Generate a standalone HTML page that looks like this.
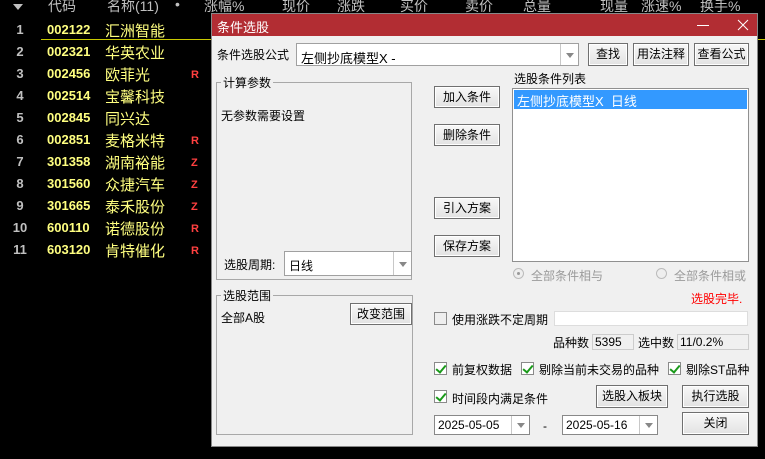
<!DOCTYPE html>
<html><head><meta charset="utf-8"><style>
*{margin:0;padding:0;box-sizing:border-box}
body{width:765px;height:459px;background:#000;position:relative;overflow:hidden;font-family:"Liberation Sans","Noto Sans CJK SC",sans-serif;font-size:12px}
.a{position:absolute;white-space:nowrap}
.h{color:#c0c0c0;font-size:14px;top:-4px}
.n{color:#c0c0c0;font-size:13px;font-weight:bold;width:26px;text-align:center}
.c{color:#ffff80;font-size:13px;font-weight:bold;left:47px}
.m{color:#ffff80;font-size:15px;left:105px}
.f{color:#ff4040;font-size:11px;font-weight:bold;left:191px}
.btn{position:absolute;border:1px solid #707070;background:linear-gradient(#f8f8f8,#e2e2e2);color:#000;text-align:center;font-size:12px;box-shadow:inset 0 0 0 1px #fff}
.box{position:absolute;background:#fff;border:1px solid #a0a0a0}
.grp{position:absolute;border:1px solid #a8a8a8}
.gl{position:absolute;background:#f0f0f0;padding:0 2px;font-size:12px;top:-9px;left:4px}
.t{position:absolute;font-size:12px;color:#000;white-space:nowrap}
.dd{position:absolute;right:0;top:0;bottom:0;width:18px;border-left:1px solid #c8c8c8}
.dd:after{content:"";position:absolute;left:5px;top:50%;margin-top:-2px;border:4px solid transparent;border-top:5px solid #888;border-bottom:0}
.cb{position:absolute;width:13px;height:13px;border:1px solid #8a8a8a;background:#fff}
.ck:after{content:"";position:absolute;left:3px;top:0px;width:4px;height:8px;border:solid #1a9a1a;border-width:0 2px 2px 0;transform:rotate(40deg)}
</style></head><body>
<div class="a" style="left:13px;top:4px;border:5px solid transparent;border-top:6px solid #c0c0c0;border-bottom:0"></div>
<div class="a h" style="left:48px">代码</div>
<div class="a h" style="left:107px">名称(11)</div>
<div class="a h" style="left:175px">•</div>
<div class="a h" style="left:204px">涨幅%</div>
<div class="a h" style="left:282px">现价</div>
<div class="a h" style="left:337px">涨跌</div>
<div class="a h" style="left:400px">买价</div>
<div class="a h" style="left:465px">卖价</div>
<div class="a h" style="left:523px">总量</div>
<div class="a h" style="left:600px">现量</div>
<div class="a h" style="left:641px">涨速%</div>
<div class="a h" style="left:700px">换手%</div>
<div class="a" style="left:41px;top:39px;width:171px;height:1px;background:#c8c800"></div>
<div class="a" style="left:758px;top:39px;width:7px;height:1px;background:#c8c800"></div>

<div class="a n" style="left:7px;top:22px">1</div><div class="a c" style="top:22px">002122</div><div class="a m" style="top:20px">汇洲智能</div>
<div class="a n" style="left:7px;top:44px">2</div><div class="a c" style="top:44px">002321</div><div class="a m" style="top:42px">华英农业</div>
<div class="a n" style="left:7px;top:66px">3</div><div class="a c" style="top:66px">002456</div><div class="a m" style="top:64px">欧菲光</div><div class="a f" style="top:69px">R</div>
<div class="a n" style="left:7px;top:88px">4</div><div class="a c" style="top:88px">002514</div><div class="a m" style="top:86px">宝馨科技</div>
<div class="a n" style="left:7px;top:110px">5</div><div class="a c" style="top:110px">002845</div><div class="a m" style="top:108px">同兴达</div>
<div class="a n" style="left:7px;top:132px">6</div><div class="a c" style="top:132px">002851</div><div class="a m" style="top:130px">麦格米特</div><div class="a f" style="top:135px">R</div>
<div class="a n" style="left:7px;top:154px">7</div><div class="a c" style="top:154px">301358</div><div class="a m" style="top:152px">湖南裕能</div><div class="a f" style="top:157px">Z</div>
<div class="a n" style="left:7px;top:176px">8</div><div class="a c" style="top:176px">301560</div><div class="a m" style="top:174px">众捷汽车</div><div class="a f" style="top:179px">Z</div>
<div class="a n" style="left:7px;top:198px">9</div><div class="a c" style="top:198px">301665</div><div class="a m" style="top:196px">泰禾股份</div><div class="a f" style="top:201px">Z</div>
<div class="a n" style="left:7px;top:220px">10</div><div class="a c" style="top:220px">600110</div><div class="a m" style="top:218px">诺德股份</div><div class="a f" style="top:223px">R</div>
<div class="a n" style="left:7px;top:242px">11</div><div class="a c" style="top:242px">603120</div><div class="a m" style="top:240px">肯特催化</div><div class="a f" style="top:245px">R</div>

<div class="a" style="left:211px;top:13px;width:547px;height:434px;background:#f0f0f0;border:1px solid #888">
 <div class="a" style="left:0;top:0;width:545px;height:22px;background:#b22d33;color:#fff;font-size:13px;padding:3px 0 0 5px">条件选股</div>
 <div class="a" style="left:485px;top:11px;width:12px;height:1px;background:#fff"></div>
 <svg class="a" style="left:525px;top:5px" width="12" height="12"><path d="M1 1L11 11M11 1L1 11" stroke="#fff" stroke-width="1"/></svg>
</div>
<div class="t" style="left:217px;top:46px">条件选股公式</div>
<div class="box" style="left:296px;top:43px;width:283px;height:23px"><div class="t" style="left:4px;top:4px;font-size:13px">左侧抄底模型X -</div><div class="dd"></div></div>
<div class="btn" style="left:588px;top:43px;width:40px;height:23px;line-height:21px">查找</div>
<div class="btn" style="left:633px;top:43px;width:56px;height:23px;line-height:21px">用法注释</div>
<div class="btn" style="left:694px;top:43px;width:55px;height:23px;line-height:21px">查看公式</div>

<div class="grp" style="left:216px;top:82px;width:196px;height:198px"><div class="gl">计算参数</div></div>
<div class="t" style="left:221px;top:107px">无参数需要设置</div>
<div class="t" style="left:224px;top:256px">选股周期:</div>
<div class="box" style="left:284px;top:251px;width:128px;height:25px"><div class="t" style="left:4px;top:5px">日线</div><div class="dd"></div></div>

<div class="btn" style="left:434px;top:86px;width:66px;height:22px;line-height:20px">加入条件</div>
<div class="btn" style="left:434px;top:124px;width:66px;height:22px;line-height:20px">删除条件</div>
<div class="btn" style="left:434px;top:197px;width:66px;height:22px;line-height:20px">引入方案</div>
<div class="btn" style="left:434px;top:235px;width:66px;height:22px;line-height:20px">保存方案</div>

<div class="t" style="left:514px;top:70px">选股条件列表</div>
<div class="box" style="left:512px;top:88px;width:237px;height:174px;border-color:#909090"><div class="a" style="left:1px;top:1px;width:233px;height:19px;background:#3399ff;color:#fff;font-size:13px;padding:1px 0 0 3px">左侧抄底模型X&nbsp; 日线</div></div>
<div class="a" style="left:513px;top:268px;width:11px;height:11px;border-radius:50%;border:1px solid #bbb;background:#eee"><div class="a" style="left:3px;top:3px;width:3px;height:3px;border-radius:50%;background:#999"></div></div>
<div class="t" style="left:531px;top:267px;color:#9a9a9a">全部条件相与</div>
<div class="a" style="left:656px;top:268px;width:11px;height:11px;border-radius:50%;border:1px solid #bbb;background:#eee"></div>
<div class="t" style="left:674px;top:267px;color:#9a9a9a">全部条件相或</div>
<div class="t" style="left:691px;top:290px;color:#f00">选股完毕.</div>

<div class="grp" style="left:216px;top:295px;width:197px;height:140px"><div class="gl">选股范围</div></div>
<div class="t" style="left:221px;top:309px">全部A股</div>
<div class="btn" style="left:350px;top:303px;width:62px;height:22px;line-height:20px">改变范围</div>

<div class="cb" style="left:434px;top:312px;background:#eee"></div>
<div class="t" style="left:452px;top:311px">使用涨跌不定周期</div>
<div class="box" style="left:554px;top:311px;width:194px;height:15px;border-color:#ddd"></div>
<div class="t" style="left:553px;top:334px">品种数</div>
<div class="a" style="left:592px;top:334px;width:42px;height:16px;border:1px solid #ccc;font-size:12px;padding-left:2px;line-height:14px">5395</div>
<div class="t" style="left:638px;top:334px">选中数</div>
<div class="a" style="left:677px;top:334px;width:72px;height:16px;border:1px solid #ccc;font-size:12px;padding-left:2px;line-height:14px">11/0.2%</div>

<div class="cb ck" style="left:434px;top:362px"></div><div class="t" style="left:452px;top:361px">前复权数据</div>
<div class="cb ck" style="left:521px;top:362px"></div><div class="t" style="left:539px;top:361px">剔除当前未交易的品种</div>
<div class="cb ck" style="left:668px;top:362px"></div><div class="t" style="left:686px;top:361px">剔除ST品种</div>
<div class="cb ck" style="left:434px;top:390px"></div><div class="t" style="left:452px;top:390px">时间段内满足条件</div>
<div class="btn" style="left:596px;top:385px;width:72px;height:23px;line-height:21px">选股入板块</div>
<div class="btn" style="left:682px;top:385px;width:67px;height:23px;line-height:21px">执行选股</div>
<div class="box" style="left:434px;top:415px;width:96px;height:20px;border-color:#888"><div class="t" style="left:3px;top:2px">2025-05-05</div><div class="dd"></div></div>
<div class="t" style="left:543px;top:419px">-</div>
<div class="box" style="left:562px;top:415px;width:96px;height:20px;border-color:#888"><div class="t" style="left:3px;top:2px">2025-05-16</div><div class="dd"></div></div>
<div class="btn" style="left:682px;top:412px;width:67px;height:23px;line-height:21px">关闭</div>
</body></html>
